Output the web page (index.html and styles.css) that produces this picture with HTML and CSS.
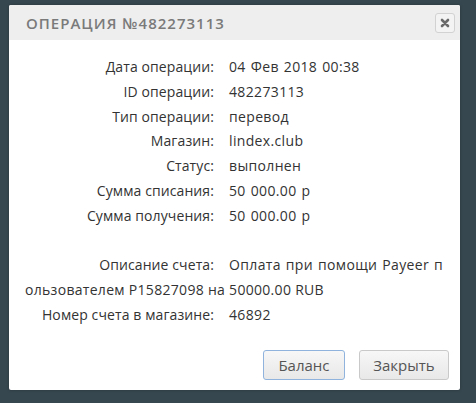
FILE: index.html
```html
<!DOCTYPE html>
<html lang="ru">
<head>
<meta charset="utf-8">
<link rel="stylesheet" href="styles.css">
</head>
<body>
<div class="dialog">
  <div class="header">
    <span class="title">Операция №482273113</span>
    <button class="close" aria-label="close">
      <svg width="10" height="10" viewBox="0 0 10 10"><path d="M2 2 L8 8 M8 2 L2 8" stroke="#6a6a6a" stroke-width="2.6" stroke-linecap="round"/></svg>
    </button>
  </div>
  <div class="body">
    <div class="grid">
      <div class="lbl">Дата операции:</div><div class="val">04 Фев 2018 00:38</div>
      <div class="lbl">ID операции:</div><div class="val">482273113</div>
      <div class="lbl">Тип операции:</div><div class="val">перевод</div>
      <div class="lbl">Магазин:</div><div class="val">lindex.club</div>
      <div class="lbl">Статус:</div><div class="val">выполнен</div>
      <div class="lbl">Сумма списания:</div><div class="val">50 000.00 р</div>
      <div class="lbl">Сумма получения:</div><div class="val">50 000.00 р</div>
      <div class="lbl blank">&nbsp;</div><div class="val">&nbsp;</div>
      <div class="lbl">Описание счета:</div><div class="val">Оплата при помощи Payeer п</div>
      <div class="wrap">ользователем P15827098 на 50000.00 RUB</div>
      <div class="lbl">Номер счета в магазине:</div><div class="val">46892</div>
    </div>
  </div>
  <div class="footer">
    <button class="btn focus">Баланс</button>
    <button class="btn">Закрыть</button>
  </div>
</div>
</body>
</html>
```
FILE: styles.css
```css
html, body {
  margin: 0;
  padding: 0;
}
body {
  width: 476px;
  height: 403px;
  background: #37474f;
  overflow: hidden;
  padding: 5px 0 0 9px;
  box-sizing: border-box;
  font-family: "Open Sans", sans-serif;
}
.dialog {
  width: 451px;
  height: 385px;
  background: #fff;
  border-radius: 2px;
  box-shadow: 0 0 3px rgba(0,0,0,0.3);
  display: flex;
  flex-direction: column;
  overflow: hidden;
}
.header {
  height: 35px;
  background: #eeeeee;
  display: flex;
  align-items: center;
  justify-content: space-between;
  padding: 0 5px 0 17px;
}
.title {
  text-transform: uppercase;
  font-family: "Open Sans", sans-serif;
  font-size: 15px;
  font-weight: 600;
  letter-spacing: 1px;
  color: #7a7a7a;
}
.close {
  width: 20px;
  height: 20px;
  padding: 0;
  border: 1px solid #d2d2d2;
  border-radius: 3px;
  background: #f3f3f3;
  display: flex;
  align-items: center;
  justify-content: center;
}
.body {
  padding: 15px 0 0 16px;
  flex: 1;
}
.grid {
  display: grid;
  grid-template-columns: 189px auto;
  column-gap: 15px;
  font-size: 14px;
  line-height: 24.8px;
  color: #333;
}
.lbl {
  text-align: right;
  white-space: nowrap;
  letter-spacing: 0.1px;
}
.val {
  white-space: nowrap;
  word-spacing: 1px;
  letter-spacing: 0.35px;
}
.wrap {
  grid-column: 1 / 3;
  white-space: nowrap;
  letter-spacing: 0.3px;
}
.footer {
  display: flex;
  justify-content: flex-end;
  gap: 14px;
  padding: 0 11px 10px 0;
}
.btn {
  height: 30px;
  padding: 0;
  font-family: "Open Sans", sans-serif;
  font-size: 15px;
  color: #555;
  background: linear-gradient(#f7f7f7, #e8e8e8);
  border: 1px solid #c9c9c9;
  border-radius: 3px;
}
.btn.focus {
  width: 82px;
  border-color: #8fb3dc;
}
.btn:not(.focus) {
  width: 90px;
}
```
